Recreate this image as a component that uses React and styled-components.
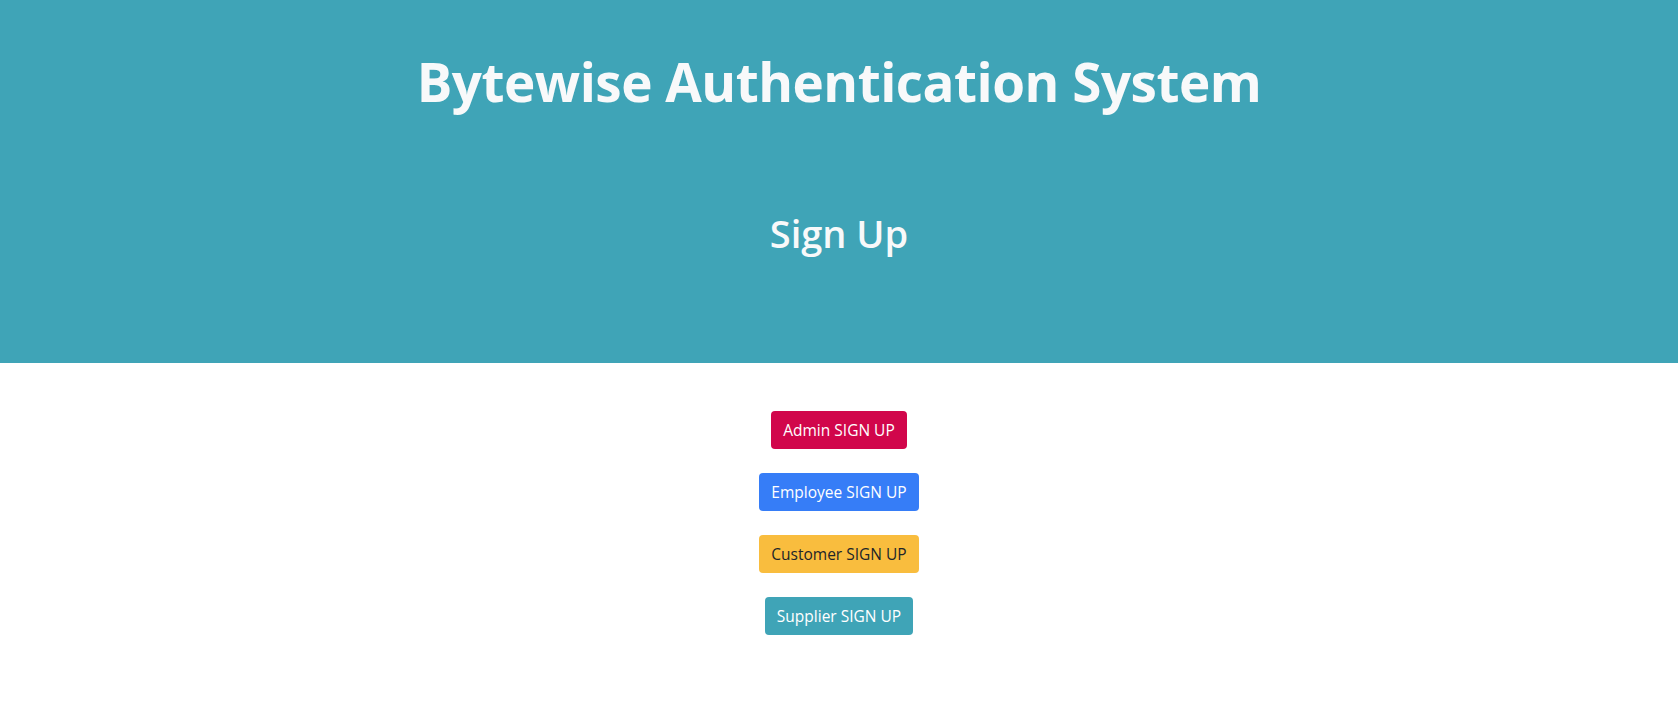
import React from 'react';
import styled, { createGlobalStyle } from 'styled-components';

const GlobalStyle = createGlobalStyle`
    body {
        margin: 0;
        font-family: 'Open Sans', 'Noto Sans', sans-serif;
        background: #fff;
    }
`;

const Header = styled.header`
    background: #3fa4b7;
    height: 363px;
    box-sizing: border-box;
    padding-top: 50px;
    display: flex;
    flex-direction: column;
    align-items: center;
    color: #f8f9fa;
`;

const Title = styled.h1`
    margin: 0;
    font-size: 53px;
    font-weight: 700;
    line-height: 1.2;
    letter-spacing: -0.5px;
`;

const SubTitle = styled.h2`
    margin: 97px 0 0;
    font-size: 38px;
    font-weight: 600;
    line-height: 1.2;
`;

const ButtonList = styled.div`
    display: flex;
    flex-direction: column;
    align-items: center;
    gap: 24px;
    padding-top: 48px;
`;

const colors = {
    danger: { bg: '#d1064b', fg: '#fff' },
    primary: { bg: '#367df7', fg: '#fff' },
    warning: { bg: '#f9bd3e', fg: '#212529' },
    info: { bg: '#3fa4b7', fg: '#fff' },
};

const Button = styled.button`
    font-family: inherit;
    font-size: 15.5px;
    line-height: 24px;
    padding: 7px 12px;
    border: none;
    border-radius: 4px;
    cursor: pointer;
    background: ${(p) => colors[p.$variant].bg};
    color: ${(p) => colors[p.$variant].fg};
`;

const roles = [
    { name: 'Admin', variant: 'danger' },
    { name: 'Employee', variant: 'primary' },
    { name: 'Customer', variant: 'warning' },
    { name: 'Supplier', variant: 'info' },
];

export default function App() {
    return (
        <>
            <GlobalStyle />
            <Header>
                <Title>Bytewise Authentication System</Title>
                <SubTitle>Sign Up</SubTitle>
            </Header>
            <ButtonList>
                {roles.map((role) => (
                    <Button key={role.name} $variant={role.variant}>
                        {role.name} SIGN UP
                    </Button>
                ))}
            </ButtonList>
        </>
    );
}
